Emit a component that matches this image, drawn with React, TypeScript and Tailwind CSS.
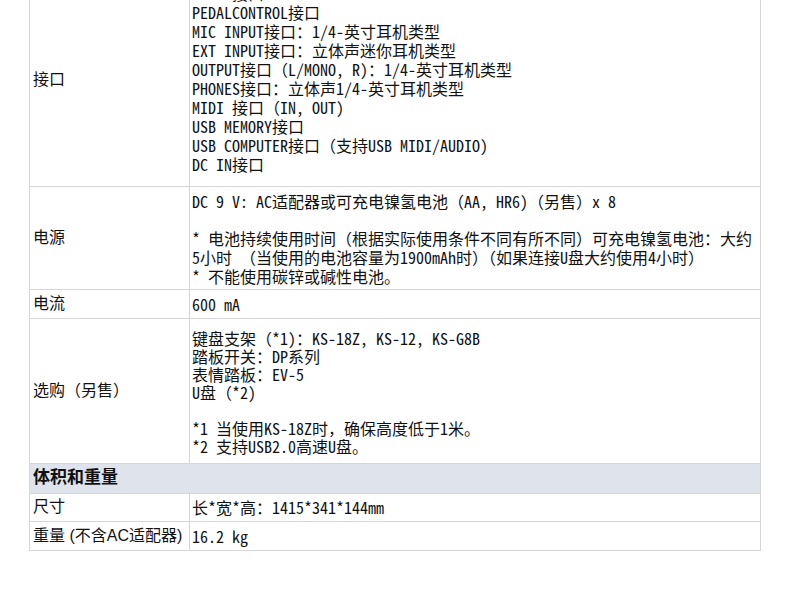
const mono = "font-['Noto_Sans_Mono_CJK_SC','Liberation_Mono','Noto_Sans_CJK_SC',monospace]"

function Lines({ lines }: { lines: string[] }) {
  return (
    <>
      {lines.map((l, i) => (
        <div key={i} className="whitespace-pre">
          {l === '' ? '\u00a0' : l}
        </div>
      ))}
    </>
  )
}

const labelCls =
  "border border-[#d6d6d6] pl-[3px] align-middle text-[16px] font-['Liberation_Sans','Noto_Sans_CJK_SC',sans-serif] text-[#111]"
const valueCls = `border border-[#d6d6d6] pl-[2px] text-[16px] text-[#111] ${mono}`

export default function App() {
  return (
    <div className="w-[790px] h-[603px] overflow-hidden bg-white">
      <table className="ml-[29px] -mt-[21px] w-[732px] border-collapse table-fixed">
        <colgroup>
          <col className="w-[160px]" />
          <col />
        </colgroup>
        <tbody>
          <tr>
            <td className={`${labelCls} pb-[6px]`}>接口</td>
            <td className={`${valueCls} align-top pt-[4px] pb-[12px] leading-[19px]`}>
              <Lines
                lines={[
                  'PEDAL接口',
                  'PEDALCONTROL接口',
                  'MIC INPUT接口：1/4-英寸耳机类型',
                  'EXT INPUT接口：立体声迷你耳机类型',
                  'OUTPUT接口（L/MONO, R)：1/4-英寸耳机类型',
                  'PHONES接口：立体声1/4-英寸耳机类型',
                  'MIDI 接口（IN, OUT)',
                  'USB MEMORY接口',
                  'USB COMPUTER接口（支持USB MIDI/AUDIO)',
                  'DC IN接口',
                ]}
              />
            </td>
          </tr>
          <tr>
            <td className={labelCls}>电源</td>
            <td className={`${valueCls} align-top pt-[5px] pb-[3px] leading-[18.7px]`}>
              <Lines
                lines={[
                  'DC 9 V: AC适配器或可充电镍氢电池（AA, HR6)（另售）x 8',
                  '',
                  '* 电池持续使用时间（根据实际使用条件不同有所不同）可充电镍氢电池：大约',
                  '5小时 （当使用的电池容量为1900mAh时）（如果连接U盘大约使用4小时）',
                  '* 不能使用碳锌或碱性电池。',
                ]}
              />
            </td>
          </tr>
          <tr className="h-[29px]">
            <td className={labelCls}>电流</td>
            <td className={`${valueCls} align-middle leading-[20px]`}>600 mA</td>
          </tr>
          <tr>
            <td className={labelCls}>选购（另售）</td>
            <td className={`${valueCls} align-top pt-[10px] pb-[8px] leading-[18px]`}>
              <Lines
                lines={[
                  '键盘支架（*1)：KS-18Z, KS-12, KS-G8B',
                  '踏板开关：DP系列',
                  '表情踏板：EV-5',
                  'U盘（*2)',
                  '',
                  '*1 当使用KS-18Z时，确保高度低于1米。',
                  '*2 支持USB2.0高速U盘。',
                ]}
              />
            </td>
          </tr>
          <tr className="h-[30px] bg-[#dfe4ec]">
            <td
              colSpan={2}
              className="border border-[#d6d6d6] pl-[3px] align-middle text-[17px] leading-[20px] font-bold text-[#111] font-['Liberation_Sans','Noto_Sans_CJK_SC',sans-serif]"
            >
              体积和重量
            </td>
          </tr>
          <tr className="h-[28px]">
            <td className={labelCls}>尺寸</td>
            <td className={`${valueCls} align-middle leading-[20px]`}>长*宽*高：1415*341*144mm</td>
          </tr>
          <tr className="h-[29px]">
            <td className={`${labelCls} whitespace-nowrap`}>重量 (不含AC适配器)</td>
            <td className={`${valueCls} align-middle leading-[20px]`}>16.2 kg</td>
          </tr>
        </tbody>
      </table>
    </div>
  )
}
